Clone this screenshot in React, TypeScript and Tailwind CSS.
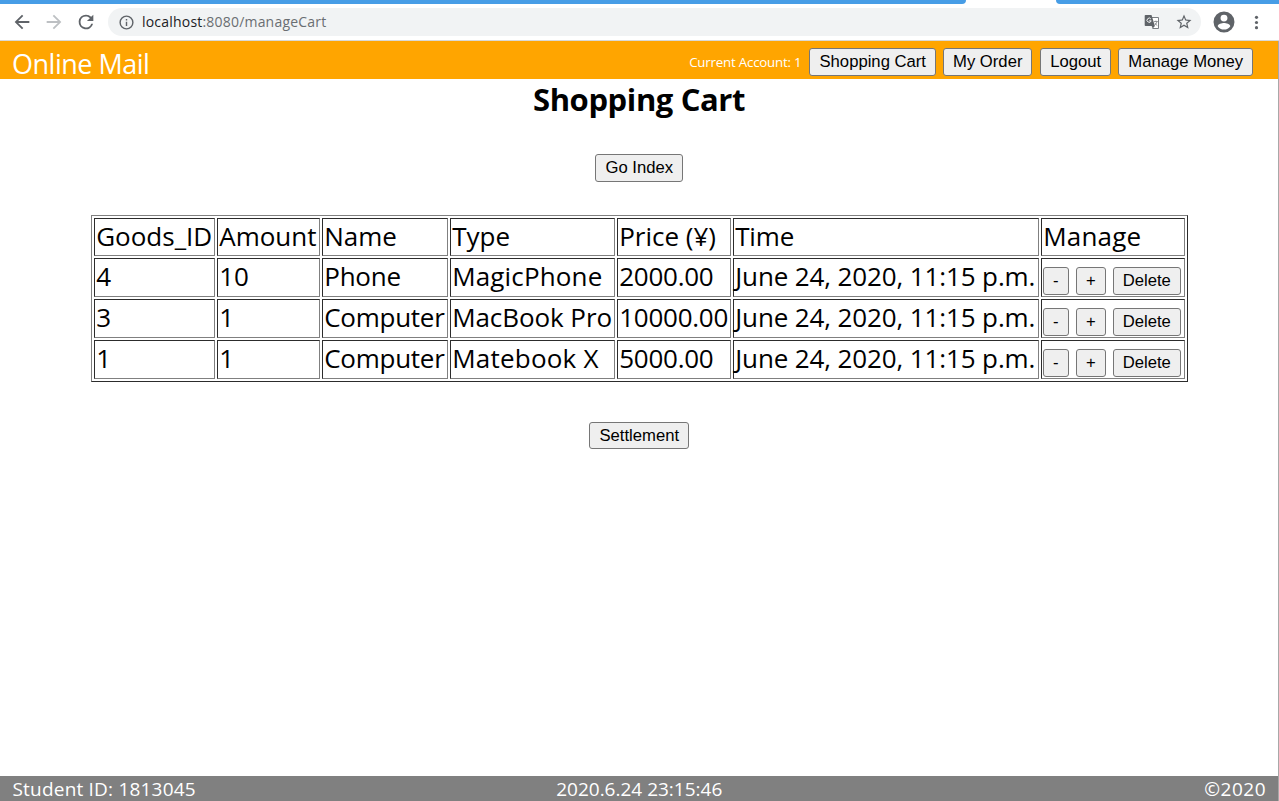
import React from "react";

const sans = "font-['Open_Sans','Noto_Sans',sans-serif]";

function Button({ children, className = "h-7" }: { children: React.ReactNode; className?: string }) {
  return (
    <button
      type="button"
      className={`flex shrink-0 items-center justify-center rounded-[3px] border border-[#767676] bg-[#efefef] pt-px pl-[0.5px] font-['Liberation_Sans',Arial,sans-serif] text-[16.67px] leading-none whitespace-nowrap text-black ${className}`}
    >
      {children}
    </button>
  );
}

function Toolbar() {
  return (
    <div className="flex h-[37px] shrink-0 items-center border-b border-[#d9d9d6] bg-white pr-[13px] pl-[11px] text-[#5f6368]">
      <svg className="mr-[10px] size-[22px]" viewBox="0 0 24 24" fill="currentColor">
        <path d="M20 11H7.83l5.59-5.59L12 4l-8 8 8 8 1.41-1.41L7.83 13H20v-2z" />
      </svg>
      <svg className="mr-[10px] size-[22px] text-[#bdc0c3]" viewBox="0 0 24 24" fill="currentColor">
        <path d="M12 4l-1.41 1.41L16.17 11H4v2h12.17l-5.58 5.59L12 20l8-8z" />
      </svg>
      <svg className="mr-[11px] size-[22px]" viewBox="0 0 24 24" fill="currentColor">
        <path d="M17.65 6.35A7.96 7.96 0 0 0 12 4a8 8 0 1 0 7.73 10h-2.08A6 6 0 1 1 12 6c1.66 0 3.14.69 4.22 1.78L13 11h7V4l-2.35 2.35z" />
      </svg>
      <div className="flex h-7 w-[1093px] items-center rounded-full bg-[#f1f3f4] pr-2 pl-[9.5px]">
        <svg className="mr-[7.5px] size-[17px]" viewBox="0 0 24 24" fill="currentColor">
          <path d="M11 7h2v2h-2zm0 4h2v6h-2zm1-9a10 10 0 1 0 0 20 10 10 0 0 0 0-20zm0 18a8 8 0 1 1 0-16 8 8 0 0 1 0 16z" />
        </svg>
        <span className={`${sans} text-[14px] leading-5 tracking-[0.2px] text-[#6a6e72]`}>
          <span className="text-[#202124]">localhost</span>:8080/manageCart
        </span>
        <svg className="mr-[15px] ml-auto size-4" viewBox="0 0 16 16">
          <path d="M6.5 3.500h8v11h-6" fill="#fff" stroke="#7b7f83" strokeWidth="1" />
          <path d="M1.5 1h6l3.4 11H1.5a.8.8 0 0 1-.8-.8V1.800a.8.8 0 0 1 .8-.8z" fill="#5f6368" />
          <path d="M7.7 12h3.2l-2.2 2.6z" fill="#5f6368" />
          <path d="M6.900 5A2.100 2.100 0 1 0 7.200 6.800H5.200" fill="none" stroke="#f1f3f4" strokeWidth="1" />
          <path d="M10 7.500h3.800M11.900 6.600v.9M13 7.600c-.3 1.600-1.100 2.700-2.300 3.600M10.900 8.800c.5 1.200 1.300 2 2.400 2.800" fill="none" stroke="#7b7f83" strokeWidth=".8" />
        </svg>
        <svg className="size-[18px]" viewBox="0 0 24 24" fill="currentColor">
          <path d="M22 9.240l-7.190-.62L12 2 9.190 8.630 2 9.240l5.460 4.730L5.820 21 12 17.270 18.180 21l-1.630-7.030L22 9.240zM12 15.400l-3.760 2.270 1-4.280-3.320-2.880 4.380-.38L12 6.100l1.710 4.040 4.380.38-3.320 2.880 1 4.280L12 15.400z" />
        </svg>
      </div>
      <svg className="ml-[12px] size-[22px]" viewBox="1.5 1.5 21 21" fill="currentColor">
        <path d="M12 2a10 10 0 1 0 0 20 10 10 0 0 0 0-20zm0 3a3.300 3.300 0 1 1 0 6.600A3.300 3.300 0 0 1 12 5zm0 14.200a7.200 7.200 0 0 1-6-3.220c.03-1.990 4-3.080 6-3.080s5.970 1.090 6 3.080a7.200 7.200 0 0 1-6 3.220z" />
      </svg>
      <svg className="ml-auto size-[19px]" viewBox="0 0 24 24" fill="currentColor">
        <circle cx="12" cy="5.500" r="2" />
        <circle cx="12" cy="12" r="2" />
        <circle cx="12" cy="18.500" r="2" />
      </svg>
    </div>
  );
}

const headers: [string, string][] = [
  ["Goods_ID", "w-[121px]"],
  ["Amount", "w-[103px]"],
  ["Name", "w-[126px]"],
  ["Type", "w-[165px]"],
  ["Price (¥)", "w-[114px]"],
  ["Time", "w-[306px] tracking-[-0.15px]"],
  ["Manage", "w-[144px] tracking-[0.2px]"],
];

type Item = { id: string; amount: string; name: string; nameTrack: string; type: string; typeTrack: string; price: string };

const items: Item[] = [
  { id: "4", amount: "10", name: "Phone", nameTrack: "tracking-[-0.2px]", type: "MagicPhone", typeTrack: "tracking-[0.15px]", price: "2000.00" },
  { id: "3", amount: "1", name: "Computer", nameTrack: "tracking-[-0.26px]", type: "MacBook Pro", typeTrack: "tracking-[-0.08px]", price: "10000.00" },
  { id: "1", amount: "1", name: "Computer", nameTrack: "tracking-[-0.26px]", type: "Matebook X", typeTrack: "tracking-[0.22px]", price: "5000.00" },
];

const cell =
  "border border-t-[#2c2c2c] border-l-[#2c2c2c] border-r-[#808080] border-b-[#808080] pr-0 pl-[1.7px] py-0 align-top whitespace-nowrap leading-[35px]";

function CartTable() {
  return (
    <table className="mt-[33px] h-[167px] w-[1097px] table-fixed border-separate border-spacing-[2px] border border-t-[#808080] border-l-[#808080] border-r-[#2c2c2c] border-b-[#2c2c2c] text-[26px]">
      <thead>
        <tr className="h-[38px]">
          {headers.map(([label, cls]) => (
            <th key={label} className={`${cell} text-left font-normal ${cls}`}>
              {label}
            </th>
          ))}
        </tr>
      </thead>
      <tbody>
        {items.map((it) => (
          <tr key={it.id} className="h-[39px]">
            <td className={cell}>{it.id}</td>
            <td className={cell}>{it.amount}</td>
            <td className={`${cell} ${it.nameTrack}`}>{it.name}</td>
            <td className={`${cell} ${it.typeTrack}`}>{it.type}</td>
            <td className={`${cell} tracking-[-0.25px]`}>{it.price}</td>
            <td className={`${cell} tracking-[-0.12px]`}>June 24, 2020, 11:15 p.m.</td>
            <td className={cell}>
              <div className="-ml-[0.7px] flex gap-[7px] pt-2">
                <Button className="h-7 w-[26px]">-</Button>
                <Button className="h-7 w-[30px]">+</Button>
                <Button className="h-7 w-[68px]">Delete</Button>
              </div>
            </td>
          </tr>
        ))}
      </tbody>
    </table>
  );
}

export default function App() {
  return (
    <div className={`flex h-[801px] w-[1279px] flex-col overflow-hidden bg-white text-black ${sans}`}>
      <div className="flex h-1 shrink-0 justify-between">
        <div className="w-[966px] rounded-br-[5px] bg-[#479de6]" />
        <div className="w-[223px] rounded-bl-[5px] bg-[#479de6]" />
      </div>
      <Toolbar />
      <div className="flex min-h-0 flex-1 flex-col border-r border-[#a8a8a8]">
        <header className="flex h-[38px] shrink-0 items-center bg-[#ffa500] pr-[25px] pl-3 text-white">
          <h1 className="pt-[7px] text-[27px] leading-[38px] tracking-[-0.5px]">Online Mail</h1>
          <div className="ml-auto flex items-center pt-[4px]">
            <span className="mr-[7.5px] text-[13.3px] leading-5 tracking-[-0.2px]">Current Account: 1</span>
            <Button className="mr-[7px] h-7 w-[127px]">Shopping Cart</Button>
            <Button className="mr-2 h-7 w-[89px]">My Order</Button>
            <Button className="mr-[7px] h-7 w-[71px]">Logout</Button>
            <Button className="h-7 w-[135px]">Manage Money</Button>
          </div>
        </header>
        <main className="flex flex-1 flex-col items-center">
          <h2 className="h-[75px] text-[31px] leading-[40px] font-bold tracking-[-0.4px]">Shopping Cart</h2>
          <Button className="h-7 w-[88px]">Go Index</Button>
          <CartTable />
          <Button className="mt-10 h-[27px] w-[100px]">Settlement</Button>
        </main>
        <footer className="grid h-[25px] shrink-0 grid-cols-3 bg-[#808080] pr-3 pl-[12.5px] text-[19px] leading-[26px] text-white">
          <span className="tracking-[0.2px]">Student ID: 1813045</span>
          <span className="text-center">2020.6.24 23:15:46</span>
          <span className="text-right tracking-[0.5px]">©2020</span>
        </footer>
      </div>
    </div>
  );
}
